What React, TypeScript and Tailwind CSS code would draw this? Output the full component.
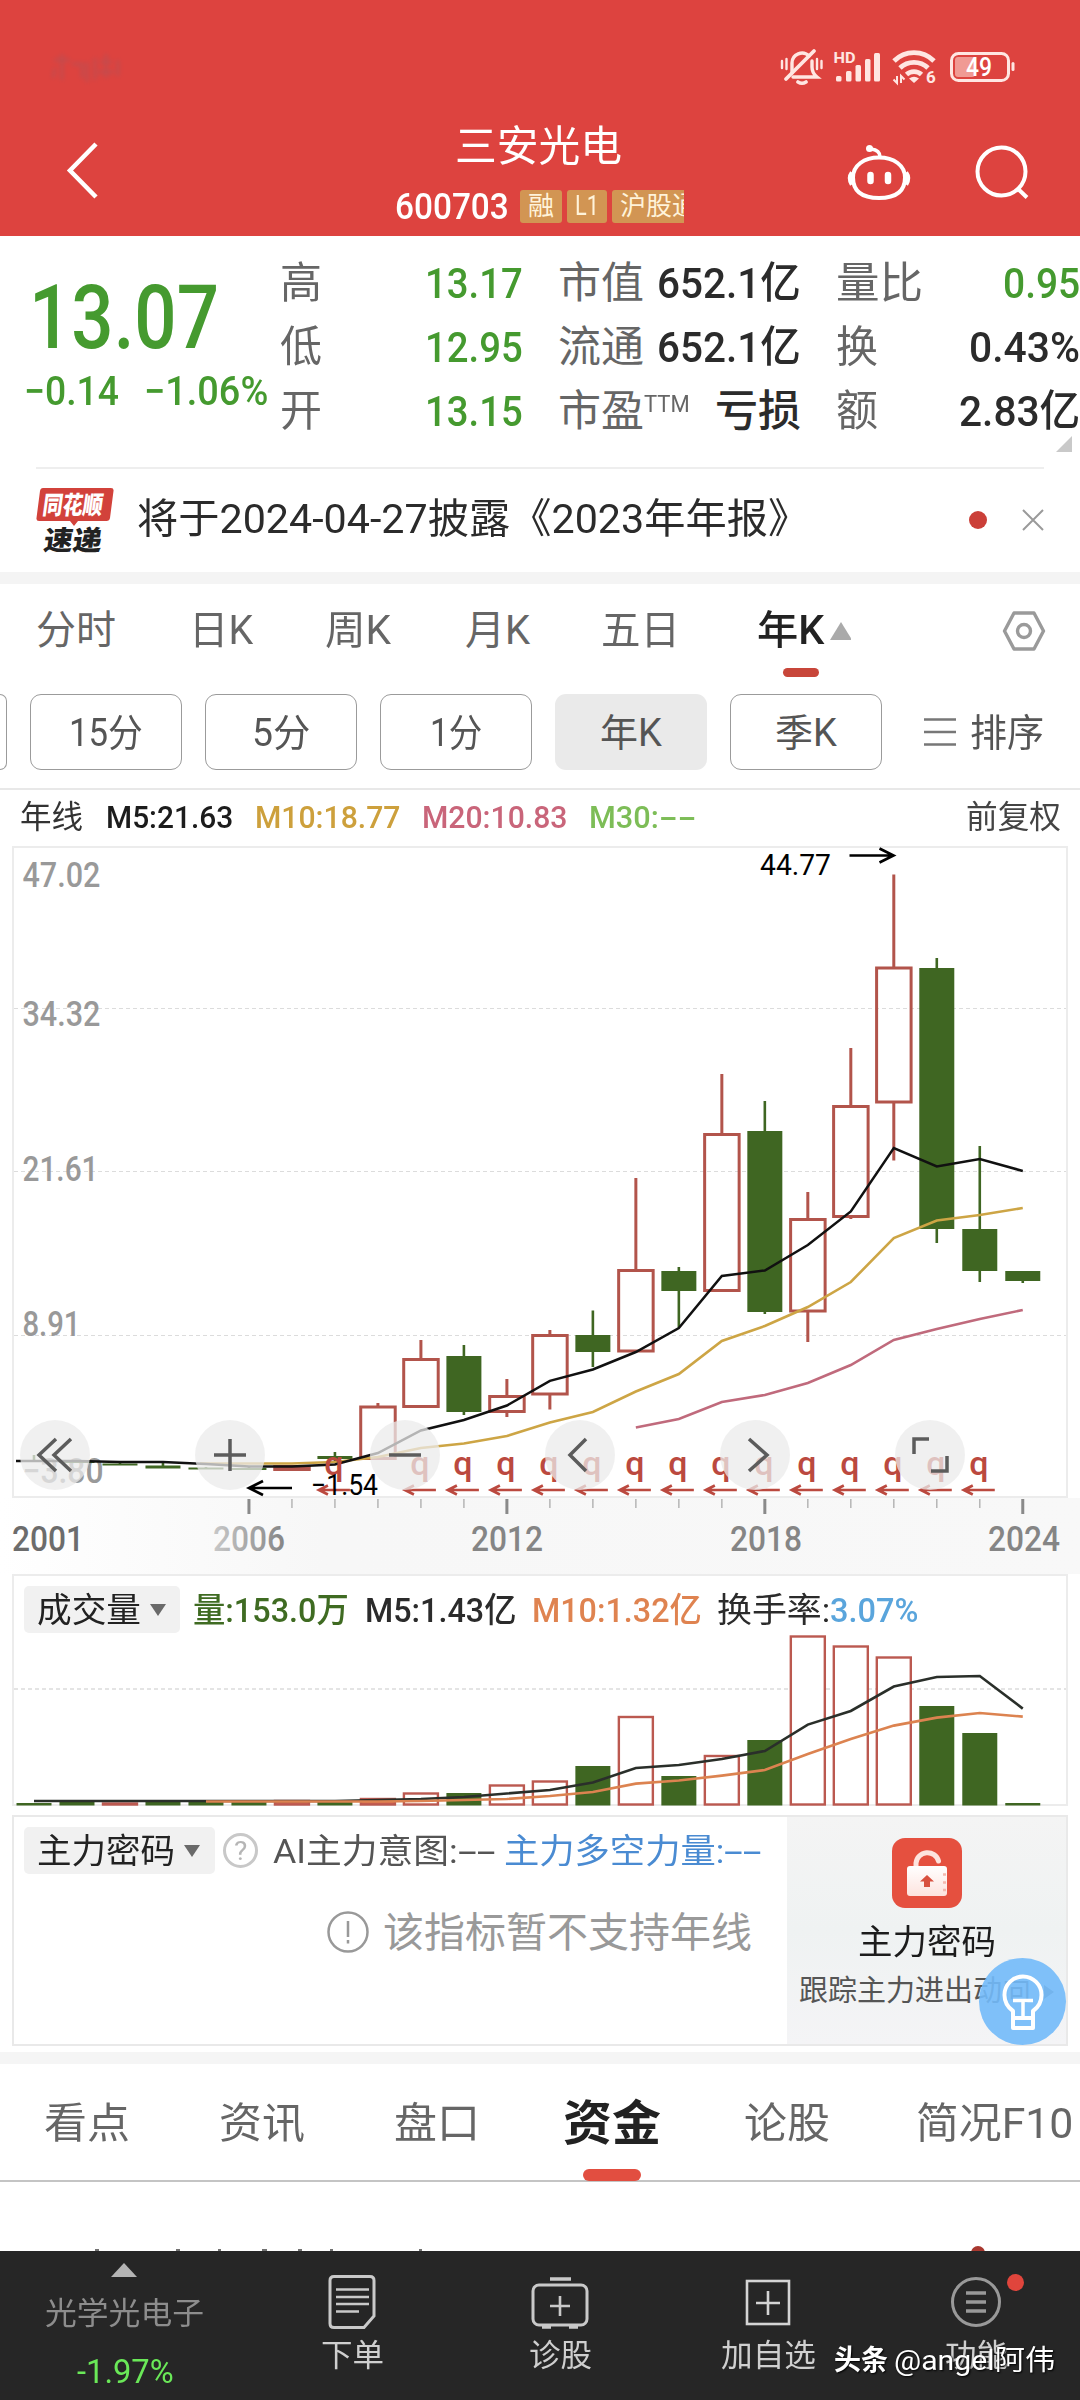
import { useLayoutEffect, useRef } from "react";
import type { ReactNode } from "react";

interface FitProps {
  w: number;
  className?: string;
  children: ReactNode;
}

// Squeezes a run of text to a fixed width, like the condensed face of the app
function Fit({ w, className = "", children }: FitProps) {
  const ref = useRef<HTMLSpanElement>(null);

  useLayoutEffect(() => {
    const el = ref.current;
    if (el) {
      el.style.transform = `scaleX(${w / el.offsetWidth})`;
    }
  }, [w]);

  return (
    <span
      className={`inline-flex shrink-0 whitespace-nowrap leading-none ${className}`}
      style={{ width: w }}
    >
      <span ref={ref} className="inline-block origin-left">
        {children}
      </span>
    </span>
  );
}

interface Candle {
  x: number;
  up: boolean;
  top: number;
  bottom: number;
  high: number;
  low: number;
}

const firstX = 34;
const step = 42.99;
const yearX = (year: number) => firstX + (year - 2001) * step;

// up, body top, body bottom, high, low
const candleRows: [boolean, number, number, number, number][] = [
  [false, 1460, 1462, 1455, 1462],
  [false, 1461, 1463, 1461, 1463],
  [false, 1463.5, 1465.5, 1461, 1465],
  [false, 1465.5, 1468.5, 1463, 1468],
  [false, 1467.5, 1469.5, 1467, 1469],
  [false, 1468, 1470, 1467, 1470],
  [true, 1466.5, 1469.5, 1466, 1470],
  [false, 1456, 1459, 1452, 1461],
  [true, 1407, 1458.5, 1403, 1459],
  [true, 1359.5, 1406.5, 1340, 1407],
  [false, 1356, 1412, 1345, 1415],
  [true, 1396.5, 1411.5, 1379, 1417],
  [true, 1335.5, 1394, 1330, 1409.5],
  [false, 1335, 1352, 1310.5, 1367],
  [true, 1270.5, 1351, 1178, 1351.5],
  [false, 1271, 1291, 1267, 1327.5],
  [true, 1134.5, 1290.5, 1074, 1290.5],
  [false, 1131, 1312, 1101, 1314],
  [true, 1219.5, 1311, 1192, 1342],
  [true, 1106.5, 1216.5, 1048, 1219],
  [true, 968, 1102, 874.5, 1160.5],
  [false, 968, 1229, 958, 1243],
  [false, 1229, 1271, 1146, 1282],
  [false, 1271, 1281, 1271, 1283],
];

const candles: Candle[] = candleRows.map(([up, top, bottom, high, low], i) => ({
  x: firstX + i * step,
  up,
  top,
  bottom,
  high,
  low,
}));

const m5 = [
  1461, 1461, 1462, 1462, 1464, 1466.5, 1466.5, 1464.5, 1453, 1430.5, 1420,
  1405.5, 1380.8, 1369.5, 1352, 1328, 1276, 1270.5, 1245, 1211.5, 1148, 1166.5,
  1159, 1171,
];
const m10 = [
  1463.5, 1463.5, 1462, 1457, 1448, 1443.5, 1436, 1422.5, 1412, 1391.5, 1374,
  1341, 1326, 1307, 1282, 1238, 1220.5, 1215, 1208,
];
const m20 = [1427.5, 1419, 1402, 1395, 1383, 1365, 1340, 1329, 1319, 1310];

// up, top edge of the bar
const volumeRows: [boolean, number][] = [
  [false, 1803],
  [false, 1802],
  [true, 1803.5],
  [false, 1802],
  [false, 1802],
  [false, 1802],
  [true, 1801],
  [false, 1802],
  [true, 1799],
  [true, 1793.5],
  [false, 1793],
  [true, 1785.5],
  [true, 1781.5],
  [false, 1766],
  [true, 1717],
  [false, 1776],
  [true, 1756],
  [false, 1740],
  [true, 1636.5],
  [true, 1646.5],
  [true, 1657.5],
  [false, 1706],
  [false, 1733],
  [false, 1803],
];
const volM5 = [
  1801, 1801, 1801, 1801, 1801, 1801, 1801, 1801, 1800, 1799, 1797, 1793.5,
  1790, 1782.5, 1768, 1765, 1759, 1751, 1724.6, 1711, 1686.5, 1677, 1676,
  1708.6,
];
const volM10 = [
  1801.5, 1801.5, 1801.5, 1801.5, 1801.5, 1801, 1800, 1799, 1796, 1792, 1783.6,
  1780.5, 1775.6, 1770, 1754, 1739, 1725.6, 1717.6, 1713, 1716.6,
];

function toPoints(values: number[], startYear: number) {
  return values.map((y, i) => `${yearX(startYear + i)},${y}`).join(" ");
}

const years = Array.from({ length: 19 }, (_, i) => 2006 + i);
const dividendYears = [2008, ...Array.from({ length: 14 }, (_, i) => 2010 + i)];

function StatusBar() {
  return (
    <div className="flex h-[102px] items-end justify-between pr-[64px] pb-[16px] pl-[50px]">
      <svg width="76" height="38" className="opacity-30 blur-[2px]">
        <g fill="none" stroke="#8a5f6e" strokeWidth="3">
          <path d="M4 12h16M12 6v26M5 20l-2 10M22 16h10v14M37 14v20M45 10v22M50 14h12M56 6v24M48 24h16M68 12v16" />
        </g>
      </svg>
      <svg width="238" height="40" viewBox="778 46 238 40" fill="none">
        <g stroke="#ffe6e2" strokeWidth="3.4" strokeLinecap="round">
          <path d="M792 73v-10a10 10 0 0 1 17-7M793 77h24q-5-4-5-10v-6" />
          <path d="M814 51l-28 28" strokeWidth="3.800" />
          <path d="M798 82q4 2.500 8 0" strokeWidth="3.600" />
          <path d="M782 61v7M786.500 59v10M817 59v10M821.500 61v7" strokeWidth="2.400" />
        </g>
        <text x="833.5" y="62.500" fontSize="14" fontWeight="700" fill="#ffe6e2" textLength="22" lengthAdjust="spacingAndGlyphs">HD</text>
        <g fill="#ffe6e2">
          <rect x="836" y="76" width="5.500" height="5.500" rx="1.500" />
          <rect x="846" y="71" width="5.500" height="10.500" rx="1.500" />
          <rect x="855.5" y="65" width="5.500" height="16.500" rx="1.500" />
          <rect x="865" y="59" width="5.500" height="22.500" rx="1.500" />
          <rect x="874" y="53" width="6" height="28.500" rx="1.500" />
        </g>
        <g stroke="#ffe6e2" strokeWidth="4.800">
          <path d="M894 61a28 28 0 0 1 40 0" />
          <path d="M900 68a20 20 0 0 1 28 0" />
          <path d="M906.500 74.500a11 11 0 0 1 15 0" />
        </g>
        <path d="M914 83l-5-4.500q5-3.500 10 0z" fill="#ffe6e2" />
        <path d="M897 76v7l-3.500-3.500M901 83v-7l3.500 3.500" stroke="#ffe6e2" strokeWidth="2" />
        <text x="926" y="83" fontSize="17" fontWeight="700" fill="#ffe6e2">6</text>
        <rect x="951.5" y="53.500" width="57" height="27" rx="7" stroke="#ffe6e2" strokeWidth="3" />
        <rect x="955" y="57" width="20" height="20" rx="3" fill="#f09a94" />
        <rect x="1011.500" y="62" width="3" height="9" rx="1.500" fill="#ffe6e2" />
        <text x="966" y="76" fontSize="25" fontWeight="500" fill="#fff" textLength="26" lengthAdjust="spacingAndGlyphs">49</text>
      </svg>
    </div>
  );
}

function Header() {
  return (
    <header className="h-[236px] bg-[#dd433f] text-white">
      <StatusBar />
      <div className="flex h-[134px]">
        <svg width="60" height="60" viewBox="60 140 60 60" className="mt-[38px] ml-[60px]" fill="none">
          <path d="M96 144L70 170.500L96 197" stroke="#fff" strokeWidth="4.500" />
        </svg>
        <div className="ml-[275px] flex w-[289px] flex-col pt-[24px]">
          <Fit w={167} className="ml-[60px] text-[42px]">
            三安光电
          </Fit>
          <div className="mt-[20px] flex h-[36px] items-center">
            <Fit w={114} className="pt-[2px] text-[36px] font-medium">
              600703
            </Fit>
            <div className="ml-[11px] flex h-[33px] w-[42px] shrink-0 items-center justify-center rounded-[3px] bg-[#d29553] text-[#fff3da]">
              <Fit w={26} className="text-[26px]">
                融
              </Fit>
            </div>
            <div className="ml-[5px] flex h-[33px] w-[40px] shrink-0 items-center justify-center rounded-[3px] bg-[#d29553] text-[#fff3da]">
              <Fit w={24} className="text-[28px]">
                L1
              </Fit>
            </div>
            <div className="ml-[5px] flex h-[33px] w-[72px] items-center overflow-hidden rounded-l-[3px] bg-[#d29553] pl-[8px] text-[#fff3da]">
              <Fit w={78} className="text-[26px]">
                沪股通
              </Fit>
            </div>
          </div>
        </div>
        <svg width="190" height="64" viewBox="845 140 190 64" className="mt-[38px] ml-[161px]" fill="none" stroke="#fff" strokeWidth="4">
          <path d="M879 157.500c15 0 26 8 26 20 0 14-9 20.500-26 20.500s-26-6.500-26-20.500c0-12 11-20 26-20z" />
          <path d="M852 172.500q-4 5.500 0 12M906 172.500q4 5.500 0 12" strokeWidth="4.500" />
          <path d="M880 157q0-7-9-8" strokeWidth="3.500" />
          <circle cx="869.500" cy="148.500" r="3.500" fill="#fff" stroke="none" />
          <path d="M870.500 175v6M888 175v6" strokeWidth="6.500" strokeLinecap="round" />
          <circle cx="1001.500" cy="171.500" r="24" />
          <path d="M1017 188l10 9.500" />
        </svg>
      </div>
    </header>
  );
}

interface QuoteRowProps {
  label: string;
  price: string;
  capLabel: ReactNode;
  cap: ReactNode;
  lastLabel: ReactNode;
  last: ReactNode;
}

function QuoteRow({ label, price, capLabel, cap, lastLabel, last }: QuoteRowProps) {
  return (
    <div className="flex h-[63.700px] items-center text-[43px] text-[#666]">
      <Fit w={42}>{label}</Fit>
      <Fit w={98} className="ml-[103px] font-medium text-[#459a2f]">
        {price}
      </Fit>
      <div className="ml-[35px] flex w-[243px] items-center justify-between">
        {capLabel}
        {cap}
      </div>
      <div className="ml-[35px] flex w-[244px] items-center justify-between">
        {lastLabel}
        {last}
      </div>
    </div>
  );
}

function Quote() {
  return (
    <section className="relative flex h-[231px] pt-[16px]">
      <div className="w-[280px]">
        <Fit w={190} className="mt-[21px] ml-[29px] text-[89px] font-medium text-[#459a2f]">
          13.07
        </Fit>
        <div className="mt-[10px] flex text-[40px] font-medium text-[#459a2f]">
          <Fit w={95} className="ml-[24px]">
            −0.14
          </Fit>
          <Fit w={124} className="ml-[25px]">
            −1.06%
          </Fit>
        </div>
      </div>
      <div className="w-[800px]">
        <QuoteRow
          label="高"
          price="13.17"
          capLabel={<Fit w={86}>市值</Fit>}
          cap={<Fit w={144} className="font-medium text-[#2b2b2b]">652.1亿</Fit>}
          lastLabel={<Fit w={87}>量比</Fit>}
          last={<Fit w={77} className="font-medium text-[#459a2f]">0.95</Fit>}
        />
        <QuoteRow
          label="低"
          price="12.95"
          capLabel={<Fit w={86}>流通</Fit>}
          cap={<Fit w={144} className="font-medium text-[#2b2b2b]">652.1亿</Fit>}
          lastLabel={<Fit w={42}>换</Fit>}
          last={<Fit w={111} className="font-medium text-[#2b2b2b]">0.43%</Fit>}
        />
        <QuoteRow
          label="开"
          price="13.15"
          capLabel={
            <span className="flex">
              <Fit w={86}>市盈</Fit>
              <Fit w={46} className="pt-[3px] text-[23px]">TTM</Fit>
            </span>
          }
          cap={<Fit w={86} className="font-medium text-[#2b2b2b]">亏损</Fit>}
          lastLabel={<Fit w={42}>额</Fit>}
          last={<Fit w={121} className="font-medium text-[#2b2b2b]">2.83亿</Fit>}
        />
      </div>
      <svg width="16" height="16" className="absolute right-[8px] bottom-[15px]">
        <path d="M16 0v16H0z" fill="#c9c9c9" />
      </svg>
    </section>
  );
}

function Notice() {
  return (
    <div className="flex h-[105px] flex-col">
      <div className="mx-[36px] h-[2px] shrink-0 bg-[#eee]" />
      <div className="flex flex-1 items-center pb-[2px]">
        <svg width="80" height="66" viewBox="35 486 80 66" className="ml-[35px]">
          <path d="M43 487h68q3 0 2.500 3l-3.500 27q-.500 3-3.500 3H78l-4 5-4-5H39q-3 0-2.500-3l3.500-27q.500-3 3-3z" fill="#d2423b" />
          <g transform="skewX(-8)" fontWeight="900">
            <text x="114" y="513.500" fontSize="25" fill="#fff" textLength="60" lengthAdjust="spacingAndGlyphs">同花顺</text>
            <text x="120" y="549" fontSize="27" fill="#222" textLength="58" lengthAdjust="spacingAndGlyphs">速递</text>
          </g>
        </svg>
        <Fit w={672} className="ml-[22px] text-[41px] text-[#2b2b2b]">
          将于2024-04-27披露《2023年年报》
        </Fit>
        <div className="ml-[160px] size-[18px] rounded-full bg-[#cb3f38]" />
        <svg width="22" height="22" className="ml-[35px]" stroke="#9a9a9a" strokeWidth="2">
          <path d="M1 1l20 20M21 1L1 21" />
        </svg>
      </div>
    </div>
  );
}

function PeriodTabs() {
  return (
    <div className="flex h-[110px] pt-[27px] text-[40px] text-[#666]">
      <Fit w={80} className="ml-[36px]">分时</Fit>
      <Fit w={64} className="ml-[73px]">日K</Fit>
      <Fit w={66} className="ml-[72px]">周K</Fit>
      <Fit w={65} className="ml-[74px]">月K</Fit>
      <Fit w={79} className="ml-[71px]">五日</Fit>
      <div className="ml-[77px] flex w-[94px] flex-col">
        <div className="flex items-center">
          <Fit w={67} className="font-medium text-[#222]">年K</Fit>
          <svg width="22" height="18" className="ml-[6px]">
            <path d="M11 0l11 18H0z" fill="#aaa" />
          </svg>
        </div>
        <div className="mt-[17px] ml-[26px] h-[9px] w-[36px] rounded-full bg-[#c8463a]" />
      </div>
      <svg width="44" height="44" viewBox="-22 -22 44 44" className="-mt-[2px] ml-[151px]" fill="none" stroke="#9a9a9a" strokeWidth="3.400">
        <path d="M-10-18H10L19.500 0L10 18H-10L-19.500 0z" strokeLinejoin="round" />
        <circle r="6.500" />
      </svg>
    </div>
  );
}

function PeriodButtons() {
  return (
    <div className="flex h-[94px] items-start text-[38px] text-[#555]">
      <div className="h-[76px] w-[7px] rounded-r-[9px] border border-l-0 border-[#9b9b9b]" />
      <div className="ml-[23px] flex gap-[23px]">
        <div className="flex h-[76px] w-[152px] items-center justify-center rounded-[11px] border border-[#9b9b9b] pt-[2px]">
          <Fit w={74}>15分</Fit>
        </div>
        <div className="flex h-[76px] w-[152px] items-center justify-center rounded-[11px] border border-[#9b9b9b] pt-[2px]">
          <Fit w={58}>5分</Fit>
        </div>
        <div className="flex h-[76px] w-[152px] items-center justify-center rounded-[11px] border border-[#9b9b9b] pt-[2px]">
          <Fit w={52}>1分</Fit>
        </div>
        <div className="flex h-[76px] w-[152px] items-center justify-center rounded-[11px] bg-[#eaeaea] pt-[2px]">
          <Fit w={62}>年K</Fit>
        </div>
        <div className="flex h-[76px] w-[152px] items-center justify-center rounded-[11px] border border-[#9b9b9b] pt-[2px]">
          <Fit w={62}>季K</Fit>
        </div>
      </div>
      <svg width="32" height="28" className="mt-[24px] ml-[42px]" stroke="#777" strokeWidth="2.500">
        <path d="M0 1.500h32M0 14h32M0 26.500h32" />
      </svg>
      <Fit w={74} className="mt-[20px] ml-[14px]">排序</Fit>
    </div>
  );
}

function MaLegend() {
  return (
    <div className="flex h-[58px] items-center border-t-2 border-[#e8e8e8] pb-[3px] text-[32px]">
      <Fit w={63} className="ml-[20px] text-[#333]">年线</Fit>
      <Fit w={127} className="ml-[23px] font-medium text-[#1c1c1c]">M5:21.63</Fit>
      <Fit w={145} className="ml-[22px] font-medium text-[#cda03c]">M10:18.77</Fit>
      <Fit w={145} className="ml-[22px] font-medium text-[#c9657a]">M20:10.83</Fit>
      <Fit w={70} className="ml-[22px] font-medium text-[#7dbd57]">M30:</Fit>
      <Fit w={38} className="font-medium text-[#7dbd57]">--</Fit>
      <Fit w={95} className="ml-[269px] text-[#444]">前复权</Fit>
    </div>
  );
}

interface ArrowProps {
  x: number;
  y: number;
  length: number;
  head: number;
  color: string;
}

// Arrow with its tip at x, y; a negative length points it right
function Arrow({ x, y, length, head, color }: ArrowProps) {
  const back = length > 0 ? x + head * 2 : x - head * 2;
  return (
    <path
      d={`M${x + length} ${y}H${x}M${back} ${y - head}L${x} ${y}L${back} ${y + head}`}
      fill="none"
      stroke={color}
      strokeWidth="2.700"
    />
  );
}

function KChart() {
  const priceLabels = [
    { text: "47.02", y: 887, w: 78 },
    { text: "34.32", y: 1026, w: 78 },
    { text: "21.61", y: 1181, w: 76 },
    { text: "8.91", y: 1336, w: 58 },
    { text: "−3.80", y: 1483, w: 81 },
  ];
  const axisLabels = [
    { text: "2001", x: 12, fill: "#6c6c6c" },
    { text: "2006", x: 213, fill: "url(#fade)" },
    { text: "2012", x: 471, fill: "#858585" },
    { text: "2018", x: 730, fill: "#858585" },
    { text: "2024", x: 988, fill: "#858585" },
  ];

  return (
    <div className="relative h-[728px]">
      <div className="mx-[12px] h-[652px] border-2 border-[#ececec]" />
      <div className="h-[76px] bg-linear-to-r from-white via-[#f7f7f7] via-30% to-[#f8f8f8]" />
      <svg width="1080" height="728" viewBox="0 846 1080 728" className="absolute inset-0">
        <defs>
          <linearGradient id="fade">
            <stop offset="0" stopColor="#c8c8c8" />
            <stop offset="1" stopColor="#858585" />
          </linearGradient>
        </defs>
        {[1008.5, 1171.5, 1335.500].map((y) => (
          <path key={y} d={`M14 ${y}H1066`} stroke="#dcdcdc" strokeDasharray="4 3" />
        ))}
        {priceLabels.map((l) => (
          <text key={l.text} x="22.500" y={l.y} fontSize="34.500" fontWeight="500" fill="#999" textLength={l.w} lengthAdjust="spacingAndGlyphs">
            {l.text}
          </text>
        ))}
        {years.map((year) => {
          const major = year % 6 === 2;
          return (
            <path
              key={year}
              d={`M${yearX(year)} 1499V${major || year === 2006 ? 1514 : 1508}`}
              stroke={major || year === 2006 ? "#8a8a8a" : "#b5b5b5"}
              strokeWidth={major || year === 2006 ? 3 : 1.5}
            />
          );
        })}
        {axisLabels.map((l) => (
          <text key={l.text} x={l.x} y="1551" fontSize="34.500" fontWeight="500" fill={l.fill} textLength="72" lengthAdjust="spacingAndGlyphs">
            {l.text}
          </text>
        ))}
        {candles.map((c) =>
          c.up ? (
            <g key={c.x} stroke="#b2544b" strokeWidth="3" fill="none">
              <path d={`M${c.x} ${c.high}V${c.top}M${c.x} ${c.bottom}V${c.low}`} />
              <rect x={c.x - 17.2} y={c.top} width="34.500" height={c.bottom - c.top} />
            </g>
          ) : (
            <g key={c.x} fill="#3f6622">
              <rect x={c.x - 1.3} y={c.high} width="2.600" height={c.low - c.high} />
              <rect x={c.x - 17.5} y={c.top} width="35" height={c.bottom - c.top} />
            </g>
          ),
        )}
        <polyline points={toPoints(m20, 2015)} fill="none" stroke="#c06a7c" strokeWidth="2.600" />
        <polyline points={`200,1463.5 ${toPoints(m10, 2006)}`} fill="none" stroke="#cda545" strokeWidth="2.600" />
        <polyline points={`16,1461 ${toPoints(m5, 2001)}`} fill="none" stroke="#111" strokeWidth="2.500" />
        {dividendYears.map((year) => {
          const x = yearX(year);
          return (
            <g key={year}>
              <text x={x - 1} y="1475" fontSize="34" fontWeight="500" fill="#bb493f" textAnchor="middle">
                q
              </text>
              <Arrow x={x - 16} y={1490} length={31} head={4.5} color="#bb493f" />
            </g>
          );
        })}
        <text x="311" y="1495" fontSize="29" fill="#000" textLength="67" lengthAdjust="spacingAndGlyphs">
          −1.54
        </text>
        <Arrow x={249} y={1488} length={43} head={7} color="#000" />
        <text x="760" y="875" fontSize="29" fill="#000" textLength="71" lengthAdjust="spacingAndGlyphs">
          44.77
        </text>
        <Arrow x={893.5} y={855.5} length={-44} head={7} color="#000" />
      </svg>
      <ChartControls />
    </div>
  );
}

function ChartControls() {
  const icons = [
    "M1-16L-16 0L1 16M16-16L-1 0L16 16",
    "M-16 0H16M0-16V16",
    "M-16 0H16",
    "M6-16L-10 0L6 16",
    "M-6-16L12 0L-6 16",
    "M-1-16H-16V-1M1 16H17V1",
  ];
  return (
    <div className="absolute top-[574px] left-[20px] flex gap-[105px]">
      {icons.map((d) => (
        <div key={d} className="size-[70px] rounded-full bg-[#ebebeb]/75">
          <svg width="70" height="70" viewBox="-35 -35 70 70" fill="none" stroke="#5c5c5c" strokeWidth="3.500">
            <path d={d} />
          </svg>
        </div>
      ))}
    </div>
  );
}

function VolumePanel() {
  return (
    <div className="relative h-[232px]">
      <div className="absolute inset-x-[12px] inset-y-0 border-2 border-[#ececec] bg-white" />
      <svg width="1080" height="232" viewBox="0 1574 1080 232" className="absolute inset-0">
        <path d="M14 1689H1066" stroke="#dcdcdc" strokeWidth="1.500" strokeDasharray="4 3" />
        {volumeRows.map(([up, top], i) => {
          const x = firstX + i * step;
          return up ? (
            <rect key={i} x={x - 17} y={top} width="34" height={1804.5 - top} fill={top > 1798 ? "#d9644f" : "#fff"} stroke="#bb5950" strokeWidth="2.400" />
          ) : (
            <rect key={i} x={x - 17.5} y={top} width="35" height={1805.5 - top} fill="#3f6622" />
          );
        })}
        <polyline points={toPoints(volM5, 2001)} fill="none" stroke="#2a2f2a" strokeWidth="2.600" />
        <polyline points={toPoints(volM10, 2005)} fill="none" stroke="#dc8350" strokeWidth="2.600" />
      </svg>
      <div className="relative flex pt-[12px] text-[34px]">
        <div className="ml-[24px] flex h-[47px] w-[156px] items-center rounded-[5px] bg-[#f1f1f1] pl-[13px]">
          <Fit w={104} className="text-[#222]">成交量</Fit>
          <svg width="16" height="12" className="ml-[9px]">
            <path d="M0 0h16L8 12z" fill="#6a6a6a" />
          </svg>
        </div>
        <div className="flex items-center">
          <Fit w={156} className="ml-[13px] font-medium text-[#3f6b22]">量:153.0万</Fit>
          <Fit w={151} className="ml-[16px] font-medium text-[#2b2b2b]">M5:1.43亿</Fit>
          <Fit w={170} className="ml-[16px] font-medium text-[#df8350]">M10:1.32亿</Fit>
          <Fit w={113} className="ml-[15px] text-[#2b2b2b]">换手率:</Fit>
          <Fit w={88} className="font-medium text-[#5aa5dc]">3.07%</Fit>
        </div>
      </div>
    </div>
  );
}

function SecretPanel() {
  return (
    <div className="relative mx-[12px] mt-[9px] flex h-[231px] border-2 border-[#e9e9e9]">
      <div className="flex w-[773px] shrink-0 flex-col pt-[10px]">
        <div className="flex items-center text-[34px]">
          <div className="ml-[10px] flex h-[47px] w-[191px] items-center rounded-[5px] bg-[#f1f1f1] pl-[13px]">
            <Fit w={138} className="text-[#222]">主力密码</Fit>
            <svg width="16" height="12" className="ml-[9px]">
              <path d="M0 0h16L8 12z" fill="#6a6a6a" />
            </svg>
          </div>
          <div className="ml-[8px] flex size-[35px] items-center justify-center rounded-full border-[3px] border-[#c8c8c8] text-[#b5b5b5]">
            <Fit w={13} className="text-[26px]">?</Fit>
          </div>
          <Fit w={185} className="ml-[15px] text-[#555]">AI主力意图:</Fit>
          <Fit w={38} className="text-[#555]">--</Fit>
          <Fit w={220} className="ml-[8px] text-[#4a8bd2]">主力多空力量:</Fit>
          <Fit w={38} className="text-[#4a8bd2]">--</Fit>
        </div>
        <div className="mt-[35px] flex items-center text-[#999]">
          <svg width="42" height="42" viewBox="-21 -21 42 42" className="ml-[313px]" fill="none" stroke="#999" strokeWidth="2.500">
            <circle r="19.500" />
            <path d="M0-11V5M0 8v3.500" />
          </svg>
          <Fit w={369} className="ml-[14px] pt-[4px] text-[41px]">该指标暂不支持年线</Fit>
        </div>
      </div>
      <div className="flex min-w-0 flex-1 flex-col items-center bg-linear-to-b from-[#f4f4f4] via-[#eff2f2] to-[#f4f4f6] pt-[21px]">
        <svg width="70" height="70">
          <defs>
            <linearGradient id="shine" x2="0" y2="1">
              <stop offset="0" stopColor="#fff" />
              <stop offset="1" stopColor="#fde3de" />
            </linearGradient>
          </defs>
          <rect width="70" height="70" rx="13" fill="#e5503f" />
          <path d="M24 29V25a11.500 11.500 0 0 1 22.500-2" fill="none" stroke="#fde3de" strokeWidth="5" strokeLinecap="round" />
          <rect x="15" y="28" width="40" height="30" rx="3" fill="url(#shine)" />
          <path d="M35 37l7 6.500h-4V49h-6v-5.500h-4z" fill="#d8503f" />
          <path d="M51 36.500h3M51 44.500h3M51 52h3" stroke="#f3b8ae" strokeWidth="2.500" />
        </svg>
        <Fit w={138} className="mt-[17px] text-[34px] text-[#1c1c1c]">主力密码</Fit>
        <div className="mt-[18px] flex w-[255px] items-center">
          <Fit w={232} className="text-[29px] text-[#555]">跟踪主力进出动向</Fit>
          <svg width="10" height="14" className="ml-[13px]">
            <path d="M0 0l10 7-10 7z" fill="#777" />
          </svg>
        </div>
      </div>
      <div className="absolute right-0 -bottom-[1px] size-[87px] rounded-full bg-[#72bafa]/90">
        <svg width="87" height="87" viewBox="0 0 87 87" fill="none" stroke="#fff" strokeWidth="4" strokeLinejoin="round">
          <path d="M34 60V53q-8.500-6-8.500-16a18.500 18.500 0 0 1 37 0q0 10-8.500 16v17H34V60h20" />
          <path d="M34 42.500h20M44 42.500V60" strokeWidth="3.500" />
        </svg>
      </div>
    </div>
  );
}

function InfoTabs() {
  return (
    <div className="h-[118px] border-b-2 border-[#c4c4c4] text-[42px] text-[#666]">
      <div className="flex h-[105px] items-center pt-[14px]">
        <Fit w={86} className="ml-[44px]">看点</Fit>
        <Fit w={86} className="ml-[89px]">资讯</Fit>
        <Fit w={86} className="ml-[89px]">盘口</Fit>
        <Fit w={98} className="ml-[83px] text-[48px] font-bold text-[#222]">资金</Fit>
        <Fit w={86} className="ml-[83px]">论股</Fit>
        <Fit w={157} className="ml-[86px]">简况F10</Fit>
      </div>
      <div className="ml-[583px] h-[12px] w-[58px] rounded-full bg-[#e24e40]" />
    </div>
  );
}

function BottomBar() {
  return (
    <footer className="relative flex h-[149px] bg-[#262626] text-[31px] text-[#cfcfcf]">
      <div className="flex w-[248px] flex-col items-center pt-[12px]">
        <svg width="26" height="14">
          <path d="M13 0l13 14H0z" fill="#b4b4b4" />
        </svg>
        <Fit w={159} className="mt-[21px] text-[#8d8d8d]">光学光电子</Fit>
        <Fit w={97} className="mt-[26px] ml-[3px] text-[33px] text-[#6ae858]">-1.97%</Fit>
      </div>
      <div className="flex w-[208px] flex-col items-center pt-[23px]">
        <svg width="50" height="56" viewBox="0 0 50 56" fill="none" stroke="#c9c9c9" strokeWidth="3">
          <path d="M7 2.500H43q4 0 4 4V42L37 53.500H7q-4 0-4-4V6.500q0-4 4-4z" />
          <path d="M9 15.500H42M9 23H42M9 30H42M9 37.500H32" strokeWidth="2.600" />
        </svg>
        <Fit w={63} className="mt-[10px]">下单</Fit>
      </div>
      <div className="flex w-[208px] flex-col items-center pt-[23px]">
        <svg width="60" height="56" viewBox="0 0 60 56" fill="none" stroke="#c9c9c9" strokeWidth="3">
          <rect x="3" y="11" width="54" height="40" rx="6" />
          <path d="M20 5H41M12 53h9M39 53h9" strokeWidth="3.500" />
          <path d="M30 22V42M20 32H40" strokeWidth="2.600" />
        </svg>
        <Fit w={63} className="mt-[10px]">诊股</Fit>
      </div>
      <div className="flex w-[208px] flex-col items-center pt-[23px]">
        <svg width="50" height="56" viewBox="0 0 50 56" fill="none" stroke="#d4d4d4" strokeWidth="2.600">
          <rect x="4" y="7" width="42" height="43" />
          <path d="M25 17V41M13 29H37" />
        </svg>
        <Fit w={95} className="mt-[10px]">加自选</Fit>
      </div>
      <div className="flex w-[208px] flex-col items-center pt-[23px]">
        <svg width="96" height="56" viewBox="0 0 96 56" fill="none" stroke="#999" strokeWidth="3">
          <circle cx="48" cy="28" r="23.500" />
          <path d="M38 19H58M38 28H58M38 37H58" strokeWidth="3.500" />
          <circle cx="87.500" cy="8.500" r="8.500" fill="#e0453c" stroke="none" />
        </svg>
        <Fit w={63} className="mt-[10px]">功能</Fit>
      </div>
      <div className="absolute bottom-[25px] left-[834px] flex items-center text-white [text-shadow:1px_1px_2px_#000]">
        <Fit w={54} className="text-[28px] font-bold">头条</Fit>
        <Fit w={161} className="ml-[6px] text-[28px]">@angel阿伟</Fit>
      </div>
    </footer>
  );
}

export default function App() {
  return (
    <div className="h-[2400px] w-[1080px] overflow-hidden bg-white font-['Roboto','Noto_Sans_CJK_SC',sans-serif]">
      <Header />
      <Quote />
      <Notice />
      <div className="h-[12px] bg-[#f4f4f4]" />
      <PeriodTabs />
      <PeriodButtons />
      <MaLegend />
      <KChart />
      <VolumePanel />
      <SecretPanel />
      <div className="mt-[6px] h-[12px] bg-[#f5f5f5]" />
      <InfoTabs />
      <div className="h-[69px]">
        <svg width="1080" height="69" viewBox="0 2182 1080 69">
          <path d="M95 2250h4M176 2250h4M218 2250h3M262 2250h5M298 2250h4M330 2250h3M419 2250h3" stroke="#444" strokeWidth="1.500" />
          <circle cx="978" cy="2253" r="7" fill="#a8382f" />
        </svg>
      </div>
      <BottomBar />
    </div>
  );
}
